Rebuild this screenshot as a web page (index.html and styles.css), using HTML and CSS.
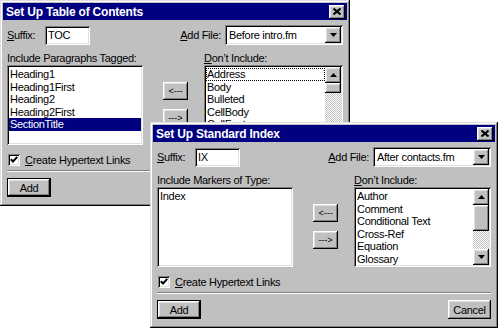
FILE: index.html
```html
<!DOCTYPE html>
<html lang="en">
<head>
<meta charset="utf-8">
<title>Set Up dialogs</title>
<link rel="stylesheet" href="styles.css">
</head>
<body>
<div class="desk">

  <div class="win win-toc">
    <div class="titlebar">
      <span class="title">Set Up Table of Contents</span>
      <span class="close raised"><svg width="8" height="7" viewBox="0 0 8 7"><path d="M0.5 0.5L7.5 6.5M7.5 0.5L0.5 6.5" stroke="#000" stroke-width="2"/></svg></span>
    </div>
    <div class="content">
      <div class="top-row">
        <span class="suffix-lbl"><u>S</u>uffix:</span>
        <span class="suffix sunken">TOC</span>
        <span class="spacer"></span>
        <span class="file-lbl"><u>A</u>dd File:</span>
        <span class="combo sunken"><span class="combo-text">Before intro.fm</span><span class="arrowbtn raised"><svg width="7" height="4" viewBox="0 0 7 4"><path d="M0 0h7L3.5 4z"/></svg></span></span>
      </div>
      <div class="lists">
        <div class="col-left">
          <div class="cap">Include Paragraphs Tagged:</div>
          <div class="list sunken">
            <div class="item">Heading1</div>
            <div class="item">Heading1First</div>
            <div class="item">Heading2</div>
            <div class="item">Heading2First</div>
            <div class="item sel">SectionTitle</div>
          </div>
        </div>
        <div class="col-mid">
          <span class="move raised">&lt;---</span>
          <span class="move raised">---&gt;</span>
        </div>
        <div class="col-right">
          <div class="cap"><u>D</u>on’t Include:</div>
          <div class="list sunken scrolled">
            <div class="items">
              <div class="item focus">Address</div>
              <div class="item">Body</div>
              <div class="item">Bulleted</div>
              <div class="item">CellBody</div>
              <div class="item">CellFooter</div>
            </div>
            <div class="vscroll">
              <span class="sbtn raised"><svg width="7" height="4" viewBox="0 0 7 4"><path d="M0 4h7L3.5 0z"/></svg></span>
              <span class="thumb raised thumb-small"></span>
              <span class="track"></span>
              <span class="sbtn raised"><svg width="7" height="4" viewBox="0 0 7 4"><path d="M0 0h7L3.5 4z"/></svg></span>
            </div>
          </div>
        </div>
      </div>
      <div class="check-row">
        <span class="checkbox sunken"><svg width="8" height="7" viewBox="0 0 8 7"><path d="M0.8 3.2l2.2 2.3 4.3-4.6" fill="none" stroke="#000" stroke-width="2"/></svg></span>
        <span class="check-lbl"><u>C</u>reate Hypertext Links</span>
      </div>
      <div class="sep"></div>
      <div class="actions">
        <span class="btn default raised">Add</span>
      </div>
    </div>
  </div>

  <div class="win win-index">
    <div class="titlebar">
      <span class="title">Set Up Standard Index</span>
      <span class="close raised"><svg width="8" height="7" viewBox="0 0 8 7"><path d="M0.5 0.5L7.5 6.5M7.5 0.5L0.5 6.5" stroke="#000" stroke-width="2"/></svg></span>
    </div>
    <div class="content">
      <div class="top-row">
        <span class="suffix-lbl"><u>S</u>uffix:</span>
        <span class="suffix sunken">IX</span>
        <span class="spacer"></span>
        <span class="file-lbl"><u>A</u>dd File:</span>
        <span class="combo sunken"><span class="combo-text">After contacts.fm</span><span class="arrowbtn raised"><svg width="7" height="4" viewBox="0 0 7 4"><path d="M0 0h7L3.5 4z"/></svg></span></span>
      </div>
      <div class="lists">
        <div class="col-left">
          <div class="cap">Include Markers of Type:</div>
          <div class="list sunken">
            <div class="item">Index</div>
          </div>
        </div>
        <div class="col-mid">
          <span class="move raised">&lt;---</span>
          <span class="move raised">---&gt;</span>
        </div>
        <div class="col-right">
          <div class="cap"><u>D</u>on’t Include:</div>
          <div class="list sunken scrolled">
            <div class="items">
              <div class="item">Author</div>
              <div class="item">Comment</div>
              <div class="item">Conditional Text</div>
              <div class="item">Cross-Ref</div>
              <div class="item">Equation</div>
              <div class="item">Glossary</div>
            </div>
            <div class="vscroll">
              <span class="sbtn raised"><svg width="7" height="4" viewBox="0 0 7 4"><path d="M0 4h7L3.5 0z"/></svg></span>
              <span class="thumb raised thumb-big"></span>
              <span class="track"></span>
              <span class="sbtn raised"><svg width="7" height="4" viewBox="0 0 7 4"><path d="M0 0h7L3.5 4z"/></svg></span>
            </div>
          </div>
        </div>
      </div>
      <div class="check-row">
        <span class="checkbox sunken"><svg width="8" height="7" viewBox="0 0 8 7"><path d="M0.8 3.2l2.2 2.3 4.3-4.6" fill="none" stroke="#000" stroke-width="2"/></svg></span>
        <span class="check-lbl"><u>C</u>reate Hypertext Links</span>
      </div>
      <div class="sep"></div>
      <div class="actions">
        <span class="btn default raised">Add</span>
        <span class="btn cancel raised">Cancel</span>
      </div>
    </div>
  </div>

</div>
</body>
</html>
```

FILE: styles.css
```css
* { box-sizing: border-box; margin: 0; padding: 0; }
html, body { width: 499px; height: 328px; overflow: hidden; background: #fff; }
body {
  font-family: "Liberation Sans", Arial, sans-serif;
  font-size: 11px;
  letter-spacing: -0.3px;
  color: #000;
}
u { text-decoration: underline; text-underline-offset: 1px; }

.desk { position: relative; width: 499px; height: 328px; }

.win {
  position: absolute;
  display: flex;
  flex-direction: column;
  background: #c0c0c0;
  padding: 3px;
  box-shadow: inset -1px -1px #000, inset 1px 1px #dfdfdf, inset -2px -2px #808080, inset 2px 2px #fff;
}
.win-toc { left: 0; top: 0; width: 350px; height: 206px; }
.win-index { left: 150px; top: 122px; width: 348px; height: 206px; }

.raised {
  background: #c0c0c0;
  box-shadow: inset -1px -1px #000, inset 1px 1px #fff, inset -2px -2px #808080, inset 2px 2px #dfdfdf;
}
.sunken {
  background: #fff;
  box-shadow: inset 1px 1px #808080, inset -1px -1px #fff, inset 2px 2px #000, inset -2px -2px #dfdfdf;
}

.titlebar {
  height: 17px;
  background: #000080;
  color: #fff;
  display: flex;
  align-items: center;
  justify-content: space-between;
  padding: 0 2px 0 3px;
}
.title { font-weight: bold; font-size: 12px; letter-spacing: -0.2px; }
.close {
  width: 16px; height: 14px;
  display: flex; align-items: center; justify-content: center;
}
.close svg { display: block; }

.content {
  flex: 1;
  display: flex;
  flex-direction: column;
  padding: 5px 4px 0 4px;
}

.top-row { display: flex; align-items: center; height: 20px; }
.suffix-lbl { width: 38px; }
.suffix {
  width: 45px; height: 19px;
  padding: 0 0 0 3px;
  line-height: 19px;
}
.spacer { flex: 1; }
.file-lbl { margin-right: 4px; }
.combo {
  width: 118px; height: 20px;
  display: flex; align-items: center;
  padding: 2px;
}
.combo-text { flex: 1; padding-left: 2px; white-space: nowrap; }
.arrowbtn {
  width: 16px; height: 16px;
  display: flex; align-items: center; justify-content: center;
}
.arrowbtn svg, .sbtn svg { display: block; }

.lists { display: flex; margin-top: 7px; }
.col-left { width: 136px; }
.col-mid {
  width: 25px;
  margin-left: 20px;
  padding-top: 30px;
  display: flex;
  flex-direction: column;
  gap: 9px;
}
.col-right { flex: 1; margin-left: 16px; }
.cap { height: 13px; line-height: 13px; white-space: nowrap; }

.list { height: 80px; padding: 2px; overflow: hidden; }
.item {
  height: 12.5px;
  line-height: 12.5px;
  padding-left: 1px;
  white-space: nowrap;
}
.list > .item:first-child { margin-top: 1px; }
.item.sel { background: #000080; color: #fff; }
.item.focus { outline: 1px dotted #000; outline-offset: -1px; }

.scrolled { display: flex; }
.items { flex: 1; padding-top: 1px; overflow: hidden; }
.vscroll { width: 16px; display: flex; flex-direction: column; }
.sbtn {
  width: 16px; height: 16px;
  display: flex; align-items: center; justify-content: center;
}
.thumb { width: 16px; }
.thumb-small { height: 10px; }
.thumb-big { height: 26px; }
.track {
  flex: 1;
  background-image: repeating-conic-gradient(#fff 0 25%, #c0c0c0 0 50%);
  background-size: 2px 2px;
}

.move {
  width: 25px; height: 18px;
  display: flex; align-items: center; justify-content: center;
  font-size: 9px; letter-spacing: 0;
}

.check-row { display: flex; align-items: center; height: 13px; margin-top: 8px; }
.checkbox {
  width: 12px; height: 12px; margin-left: 1px;
  display: flex; align-items: center; justify-content: center;
}
.checkbox svg { display: block; }
.check-lbl { margin-left: 5px; }

.sep { height: 2px; margin-top: 4px; border-top: 1px solid #808080; border-bottom: 1px solid #fff; }

.actions { display: flex; justify-content: space-between; margin-top: 6px; }
.btn {
  height: 19px;
  display: flex; align-items: center; justify-content: center;
}
.btn.default { width: 44px; border: 1px solid #000; }
.btn.cancel { width: 43px; }
```
